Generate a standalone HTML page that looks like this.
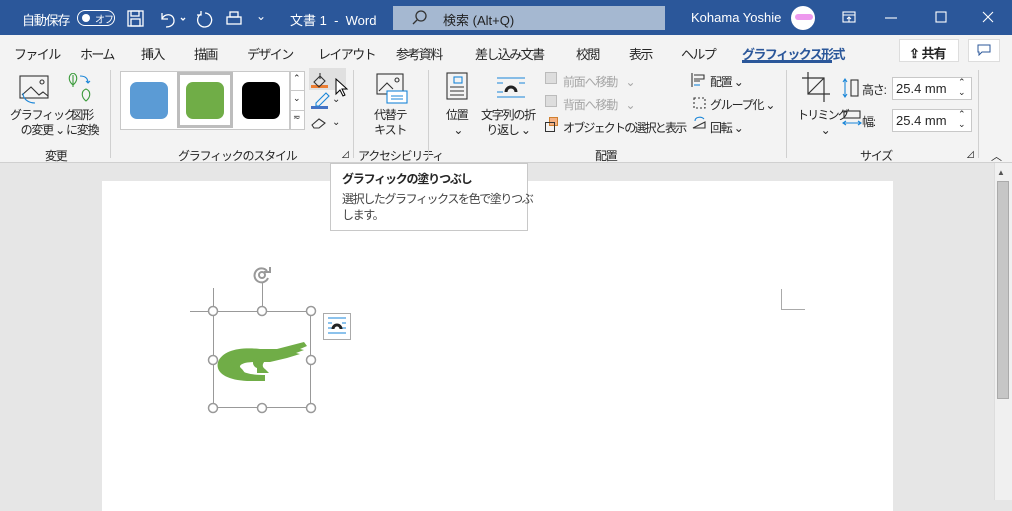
<!DOCTYPE html>
<html><head><meta charset="utf-8"><style>
*{margin:0;padding:0;box-sizing:border-box}
body{width:1012px;height:500px;overflow:hidden;position:relative;font-family:"Liberation Sans","Noto Sans CJK JP",sans-serif;background:#e6e6e6;color:#262626}
.a{position:absolute;white-space:nowrap}
.t{font-size:12px;letter-spacing:-1.2px}
.tb{font-size:13px;letter-spacing:-1.6px}
.w{color:#fff}
.g{color:#a6a6a6}
</style></head><body>
<!-- title bar -->
<div class="a" style="left:0;top:0;width:1012px;height:35px;background:#2b579a"></div>
<div class="a w" style="left:22px;top:10px;font-size:13px;letter-spacing:-1.2px">自動保存</div>
<div class="a" style="left:77px;top:10px;width:38px;height:16px;border:1.5px solid #fff;border-radius:8px"></div>
<div class="a" style="left:82px;top:14px;width:8px;height:8px;border-radius:50%;background:#fff"></div>
<div class="a w" style="left:95px;top:11px;font-size:10px;letter-spacing:-1px">オフ</div>
<svg class="a" style="left:126px;top:9px" width="120" height="20" fill="none" stroke="#fff" stroke-width="1.3">
<rect x="2" y="2" width="15" height="15"/><rect x="5" y="2" width="8" height="5"/><rect x="5" y="10" width="9" height="7"/>
<path d="M36 4v6h6M36 10c2-6 12-6 12 2c0 4-4 6-8 6"/><path d="M55 9l2 2 2-2"/>
<path d="M75 5a7 7 0 1 0 4 -1M75 2v4h-4"/>
<rect x="101" y="8" width="14" height="7"/><rect x="104" y="3" width="8" height="5"/>
</svg>
<div class="a w" style="left:256px;top:9px;font-size:12px">⌄</div>
<div class="a w" style="left:290px;top:10px;font-size:13px">文書 1&nbsp; - &nbsp;Word</div>
<div class="a" style="left:393px;top:6px;width:272px;height:24px;background:#a5b8d1"></div>
<svg class="a" style="left:412px;top:10px" width="16" height="16" fill="none" stroke="#333" stroke-width="1.3"><circle cx="9" cy="6" r="5"/><path d="M5 10l-4 4"/></svg>
<div class="a" style="left:443px;top:10px;font-size:13px;color:#222">検索 (Alt+Q)</div>
<div class="a w" style="left:691px;top:10px;font-size:13px">Kohama Yoshie</div>
<div class="a" style="left:791px;top:6px;width:24px;height:24px;border-radius:50%;background:#fff"></div>
<div class="a" style="left:795px;top:14px;width:18px;height:6px;border-radius:3px;background:#e9e"></div>
<svg class="a" style="left:838px;top:9px" width="170" height="18" fill="none" stroke="#fff" stroke-width="1.1">
<rect x="5" y="3" width="12" height="10"/><path d="M5 6h12M11 13v-5M9 10l2-2 2 2"/>
<path d="M47 9h12"/><rect x="98" y="3" width="10" height="10"/>
<path d="M145 3l10 10M155 3l-10 10"/>
</svg>
<!-- tabs -->
<div class="a" style="left:0;top:35px;width:1012px;height:128px;background:#f3f3f3;border-bottom:1px solid #d0d0d0"></div>
<div class="a tb" style="left:14px;top:44px">ファイル</div>
<div class="a tb" style="left:80px;top:44px">ホーム</div>
<div class="a tb" style="left:141px;top:44px">挿入</div>
<div class="a tb" style="left:194px;top:44px">描画</div>
<div class="a tb" style="left:247px;top:44px">デザイン</div>
<div class="a tb" style="left:318px;top:44px">レイアウト</div>
<div class="a tb" style="left:396px;top:44px">参考資料</div>
<div class="a tb" style="left:475px;top:44px">差し込み文書</div>
<div class="a tb" style="left:576px;top:44px">校閲</div>
<div class="a tb" style="left:629px;top:44px">表示</div>
<div class="a tb" style="left:681px;top:44px">ヘルプ</div>
<div class="a tb" style="left:742px;top:44px;font-weight:bold;color:#2b579a">グラフィックス形式</div>
<div class="a" style="left:742px;top:60px;width:90px;height:3px;background:#2b579a"></div>
<div class="a" style="left:899px;top:39px;width:60px;height:23px;background:#fff;border:1px solid #ddd"></div>
<div class="a" style="left:909px;top:43px;font-size:13px;font-weight:bold;letter-spacing:-1px">⇪ 共有</div>
<div class="a" style="left:968px;top:39px;width:32px;height:23px;background:#fff;border:1px solid #ddd"></div>
<svg class="a" style="left:977px;top:44px" width="14" height="12" fill="none" stroke="#2b579a"><path d="M1 1h12v7H5l-3 3V8H1z"/></svg>
<!-- ribbon -->
<svg class="a" style="left:18px;top:73px" width="86" height="34" fill="none" stroke="#333" stroke-width="1.1">
<rect x="2" y="3" width="28" height="22"/><path d="M4 22l9-8 8 8 4-3 5 4" /><circle cx="24" cy="9" r="2"/>
<path d="M5 20c0 8 8 10 12 10" stroke="#1a86d8"/>
<path d="M55 12c-5-4-5-10 0-12 5 2 5 8 0 12zM55 2v12" stroke="#3a9a3a"/><path d="M68 28c-5-4-5-10 0-12 5 2 5 8 0 12z" stroke="#3a9a3a"/>
<path d="M62 3c5 0 8 2 8 7M68 8l2 2 2-2" stroke="#1a86d8"/>
</svg>
<div class="a t" style="left:10px;top:108px;line-height:15px;text-align:center">グラフィック<br>の変更 ⌄</div>
<div class="a t" style="left:66px;top:108px;line-height:15px;text-align:center">図形<br>に変換</div>
<div class="a t" style="left:45px;top:147px">変更</div>
<div class="a" style="left:110px;top:70px;width:1px;height:88px;background:#d0d0d0"></div>
<div class="a" style="left:120px;top:71px;width:170px;height:59px;background:#fff;border:1px solid #c8c8c8"></div>
<div class="a" style="left:130px;top:82px;width:38px;height:37px;border-radius:7px;background:#5b9bd5"></div>
<div class="a" style="left:177px;top:72px;width:56px;height:56px;border:3px solid #bdbdbd;background:#fff"></div>
<div class="a" style="left:186px;top:82px;width:38px;height:37px;border-radius:7px;background:#70ad47"></div>
<div class="a" style="left:242px;top:82px;width:38px;height:37px;border-radius:7px;background:#000"></div>
<div class="a" style="left:290px;top:71px;width:15px;height:59px;background:#fff;border:1px solid #c8c8c8"></div>
<div class="a" style="left:290px;top:90px;width:15px;height:1px;background:#c8c8c8"></div>
<div class="a" style="left:290px;top:110px;width:15px;height:1px;background:#c8c8c8"></div>
<div class="a" style="left:293px;top:73px;font-size:9px">⌃</div>
<div class="a" style="left:293px;top:93px;font-size:9px">⌄</div>
<div class="a" style="left:293px;top:112px;font-size:9px">≂</div>
<div class="a" style="left:309px;top:68px;width:37px;height:22px;background:#e0e0e0"></div>
<div class="a" style="left:311px;top:85px;width:17px;height:3px;background:#ed7d31"></div>
<div class="a" style="left:311px;top:106px;width:17px;height:3px;background:#4472c4"></div>
<svg class="a" style="left:310px;top:70px" width="30" height="64" fill="none" stroke="#333" stroke-width="1.1">
<path d="M4 12l6-6 5 5-6 6zM10 3v6"/><path d="M6 33l10-10 3 3-10 10H6z" stroke="#1a86d8"/><path d="M2 55l7-6 6 4-6 5H4z"/></svg>
<svg class="a" style="left:335px;top:78px" width="14" height="22"><path d="M1 1v15l4-4 3 6 2-1-3-6h5z" fill="#fff" stroke="#000"/></svg>
<div class="a" style="left:332px;top:94px;font-size:10px">⌄</div>
<div class="a" style="left:332px;top:117px;font-size:10px">⌄</div>
<div class="a t" style="left:178px;top:147px">グラフィックのスタイル</div>
<div class="a" style="left:341px;top:148px;font-size:9px">⊿</div>
<div class="a" style="left:353px;top:70px;width:1px;height:88px;background:#d0d0d0"></div>
<svg class="a" style="left:375px;top:72px" width="34" height="34" fill="none" stroke="#333" stroke-width="1.1"><rect x="2" y="2" width="26" height="20"/><path d="M4 19l8-8 6 6"/><circle cx="22" cy="8" r="2"/><rect x="12" y="19" width="20" height="12" fill="#fff" stroke="#1a86d8"/><path d="M16 24h12M16 27h12" stroke="#1a86d8"/></svg>
<div class="a t" style="left:374px;top:108px;line-height:15px;text-align:center">代替テ<br>キスト</div>
<div class="a t" style="left:358px;top:147px">アクセシビリティ</div>
<div class="a" style="left:428px;top:70px;width:1px;height:88px;background:#d0d0d0"></div>
<svg class="a" style="left:445px;top:72px" width="80" height="32" fill="none" stroke="#333" stroke-width="1.1"><rect x="2" y="1" width="20" height="26"/><rect x="9" y="5" width="8" height="6" stroke="#1a86d8"/><path d="M5 15h14M5 19h14M5 23h14"/>
<path d="M52 6h28M52 25h28M52 11h6M74 11h6M52 20h6" stroke="#1a86d8"/><path d="M61 20a5 5 0 0 1 10 0" stroke="#222" stroke-width="3"/></svg>
<div class="a t" style="left:446px;top:108px;line-height:15px;text-align:center">位置<br>&nbsp;⌄</div>
<div class="a t" style="left:481px;top:108px;line-height:15px;text-align:center">文字列の折<br>り返し ⌄</div>
<div class="a" style="left:545px;top:72px;width:12px;height:12px;border:1px solid #bbb;background:#ddd"></div>
<div class="a t g" style="left:563px;top:73px">前面へ移動&nbsp;&nbsp;&nbsp;&nbsp;⌄</div>
<div class="a" style="left:545px;top:95px;width:12px;height:12px;border:1px solid #bbb;background:#ddd"></div>
<div class="a t g" style="left:563px;top:96px">背面へ移動&nbsp;&nbsp;&nbsp;&nbsp;⌄</div>
<div class="a" style="left:549px;top:117px;width:9px;height:9px;background:#f4b183;border:1px solid #d08030"></div>
<div class="a" style="left:545px;top:122px;width:10px;height:10px;border:1px solid #333"></div>
<div class="a t" style="left:563px;top:119px;letter-spacing:-1.8px">オブジェクトの選択と表示</div>
<svg class="a" style="left:690px;top:72px" width="20" height="62" fill="none" stroke="#333" stroke-width="1.1"><path d="M2 1v14M4 3h10v4H4M4 9h6" /><path d="M4 13h6" stroke="#1a86d8"/><rect x="4" y="26" width="11" height="10" stroke-dasharray="2 2"/><path d="M3 56l12-6v6z"/><path d="M5 49c0-4 6-5 9-2" stroke="#1a86d8"/></svg>
<div class="a t" style="left:710px;top:73px">配置 ⌄</div>
<div class="a t" style="left:710px;top:96px">グループ化 ⌄</div>
<div class="a t" style="left:710px;top:119px">回転 ⌄</div>
<div class="a t" style="left:595px;top:147px">配置</div>
<div class="a" style="left:786px;top:70px;width:1px;height:88px;background:#d0d0d0"></div>
<svg class="a" style="left:802px;top:72px" width="30" height="30" fill="none" stroke="#333" stroke-width="1.2"><path d="M6 0v22h22M0 6h22v24M6 22L22 6"/></svg>
<div class="a t" style="left:797px;top:108px;line-height:15px;text-align:center;letter-spacing:-1.8px">トリミング<br>&nbsp;&nbsp;&nbsp;⌄</div>
<svg class="a" style="left:842px;top:78px" width="20" height="50" fill="none" stroke-width="1.1"><path d="M3 1v18M1 4l2-3 2 3M1 16l2 3 2-3" stroke="#1a86d8"/><rect x="9" y="2" width="7" height="16" stroke="#333"/><rect x="2" y="33" width="16" height="7" stroke="#333"/><path d="M1 45h18M4 43l-3 2 3 2M16 43l3 2-3 2" stroke="#1a86d8"/></svg>
<div class="a t" style="left:862px;top:81px">高さ:</div>
<div class="a t" style="left:862px;top:113px">幅:</div>
<div class="a" style="left:892px;top:77px;width:80px;height:23px;background:#fff;border:1px solid #c8c8c8"></div>
<div class="a" style="left:892px;top:109px;width:80px;height:23px;background:#fff;border:1px solid #c8c8c8"></div>
<div class="a" style="left:896px;top:81px;font-size:13px">25.4 mm</div>
<div class="a" style="left:896px;top:113px;font-size:13px">25.4 mm</div>
<div class="a" style="left:958px;top:77px;font-size:9px;line-height:10px">⌃<br>⌄</div>
<div class="a" style="left:958px;top:109px;font-size:9px;line-height:10px">⌃<br>⌄</div>
<div class="a t" style="left:860px;top:147px">サイズ</div>
<div class="a" style="left:966px;top:148px;font-size:9px">⊿</div>
<div class="a" style="left:978px;top:70px;width:1px;height:88px;background:#d0d0d0"></div>
<div class="a" style="left:991px;top:148px;font-size:11px">︿</div>
<!-- document -->
<div class="a" style="left:102px;top:181px;width:791px;height:330px;background:#fff"></div>
<div class="a" style="left:994px;top:163px;width:18px;height:337px;background:#f0f0f0;border-left:1px solid #ddd"></div>
<div class="a" style="left:997px;top:168px;font-size:8px;color:#555">▲</div>
<div class="a" style="left:997px;top:181px;width:12px;height:218px;background:#c6c6c6;border:1px solid #aaa"></div>
<div class="a" style="left:781px;top:289px;width:1px;height:20px;background:#aaa"></div>
<div class="a" style="left:781px;top:309px;width:24px;height:1px;background:#aaa"></div>
<!-- selected graphic -->
<div class="a" style="left:190px;top:311px;width:23px;height:1px;background:#999"></div>
<div class="a" style="left:213px;top:288px;width:1px;height:23px;background:#999"></div>
<div class="a" style="left:213px;top:311px;width:98px;height:97px;border:1px solid #999"></div>
<div class="a" style="left:262px;top:283px;width:1px;height:28px;background:#999"></div>
<svg class="a" style="left:252px;top:265px" width="22" height="22" fill="none" stroke="#999" stroke-width="2"><path d="M15 6a7 7 0 1 0 1 7"/><circle cx="10" cy="10" r="3"/><path d="M12 7h6v-5"/></svg>
<svg class="a" style="left:215px;top:340px" width="95" height="44">
<path d="M3 22 C8 10 25 7 45 9 L62 9 L89 2 L92 6 L85 9 L89 10 L81 13 L85 14 L72 18 L55 22 L40 22 C28 22 22 25 26 30 C30 34 40 35 50 35 L50 41 L32 41 C12 40 0 33 3 22 Z" fill="#70ad47"/>
<path d="M18 18 c-3 3 -3 8 2 10 l0 5 h10 l-3-4 c-3-2 -3-5 0-8z" fill="#70ad47"/>
<path d="M40 18 c-3 3 -3 8 2 10 l0 5 h12 l-4-4 c-3-2 -3-5 0-8z" fill="#70ad47"/>
</svg>
<svg class="a" style="left:207px;top:305px" width="110" height="110" fill="#fff" stroke="#999" stroke-width="1.5">
<circle cx="6" cy="6" r="4.5"/><circle cx="55" cy="6" r="4.5"/><circle cx="104" cy="6" r="4.5"/>
<circle cx="6" cy="55" r="4.5"/><circle cx="104" cy="55" r="4.5"/>
<circle cx="6" cy="103" r="4.5"/><circle cx="55" cy="103" r="4.5"/><circle cx="104" cy="103" r="4.5"/>
</svg>
<div class="a" style="left:323px;top:313px;width:28px;height:27px;border:1px solid #aaa;background:#fff"></div>
<svg class="a" style="left:326px;top:316px" width="22" height="20" fill="none"><path d="M2 2h18M2 17h18M2 7h4M16 7h4M2 12h4M16 12h4" stroke="#1a86d8"/><path d="M7 13a4 4 0 0 1 8 0" stroke="#222" stroke-width="3"/></svg>
<!-- tooltip -->
<div class="a" style="left:330px;top:163px;width:198px;height:68px;background:#fff;border:1px solid #c8c8c8"></div>
<div class="a" style="left:342px;top:170px;font-size:12px;font-weight:bold;letter-spacing:-1.2px">グラフィックの塗りつぶし</div>
<div class="a" style="left:342px;top:191px;font-size:12px;line-height:16px;color:#444;letter-spacing:-1.4px">選択したグラフィックスを色で塗りつぶ<br>します。</div>
</body></html>
